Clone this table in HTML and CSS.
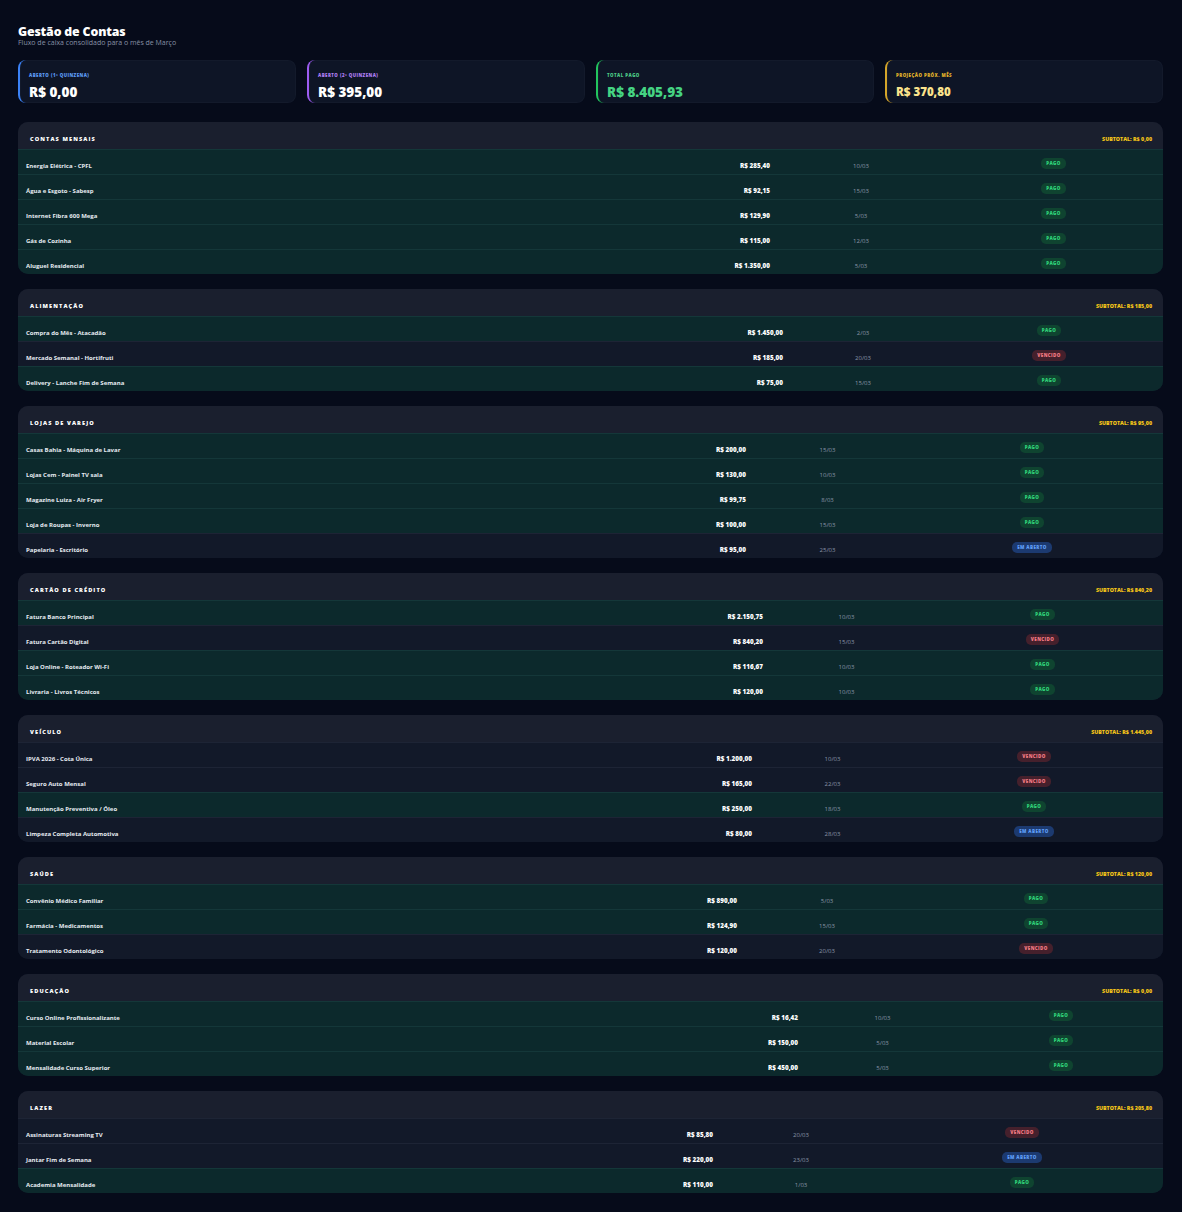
FILE: index.html
```html
<!DOCTYPE html>
<html lang="pt-BR">
<head>
<meta charset="utf-8">
<title>Gestão de Contas</title>
<link rel="stylesheet" href="styles.css">
</head>
<body>
<main class="page">
  <header class="page-head">
    <h1>Gestão de Contas</h1>
    <p class="subtitle">Fluxo de caixa consolidado para o mês de Março</p>
  </header>

  <section class="summary">
    <div class="stat stat-blue"><span class="stat-label">Aberto (1ª Quinzena)</span><span class="stat-value">R$ 0,00</span></div>
    <div class="stat stat-purple"><span class="stat-label">Aberto (2ª Quinzena)</span><span class="stat-value">R$ 395,00</span></div>
    <div class="stat stat-green"><span class="stat-label">Total Pago</span><span class="stat-value">R$ 8.405,93</span></div>
    <div class="stat stat-gold"><span class="stat-label">Projeção Próx. Mês</span><span class="stat-value">R$ 370,80</span></div>
  </section>

  <div class="groups">
    <section class="group g-contas">
      <div class="group-head"><h2>Contas Mensais</h2><span class="subtotal">Subtotal: R$ 0,00</span></div>
      <div class="row paid"><span class="c-name">Energia Elétrica - CPFL</span><span class="c-amount">R$ 285,40</span><span class="c-date">10/03</span><span class="c-status"><span class="badge pago">Pago</span></span></div>
      <div class="row paid"><span class="c-name">Água e Esgoto - Sabesp</span><span class="c-amount">R$ 92,15</span><span class="c-date">15/03</span><span class="c-status"><span class="badge pago">Pago</span></span></div>
      <div class="row paid"><span class="c-name">Internet Fibra 600 Mega</span><span class="c-amount">R$ 129,90</span><span class="c-date">5/03</span><span class="c-status"><span class="badge pago">Pago</span></span></div>
      <div class="row paid"><span class="c-name">Gás de Cozinha</span><span class="c-amount">R$ 115,00</span><span class="c-date">12/03</span><span class="c-status"><span class="badge pago">Pago</span></span></div>
      <div class="row paid"><span class="c-name">Aluguel Residencial</span><span class="c-amount">R$ 1.350,00</span><span class="c-date">5/03</span><span class="c-status"><span class="badge pago">Pago</span></span></div>
    </section>

    <section class="group g-alim">
      <div class="group-head"><h2>Alimentação</h2><span class="subtotal">Subtotal: R$ 185,00</span></div>
      <div class="row paid"><span class="c-name">Compra do Mês - Atacadão</span><span class="c-amount">R$ 1.450,00</span><span class="c-date">2/03</span><span class="c-status"><span class="badge pago">Pago</span></span></div>
      <div class="row due"><span class="c-name">Mercado Semanal - Hortifruti</span><span class="c-amount">R$ 185,00</span><span class="c-date">20/03</span><span class="c-status"><span class="badge vencido">Vencido</span></span></div>
      <div class="row paid"><span class="c-name">Delivery - Lanche Fim de Semana</span><span class="c-amount">R$ 75,00</span><span class="c-date">15/03</span><span class="c-status"><span class="badge pago">Pago</span></span></div>
    </section>

    <section class="group g-lojas">
      <div class="group-head"><h2>Lojas de Varejo</h2><span class="subtotal">Subtotal: R$ 95,00</span></div>
      <div class="row paid"><span class="c-name">Casas Bahia - Máquina de Lavar</span><span class="c-amount">R$ 200,00</span><span class="c-date">15/03</span><span class="c-status"><span class="badge pago">Pago</span></span></div>
      <div class="row paid"><span class="c-name">Lojas Cem - Painel TV sala</span><span class="c-amount">R$ 130,00</span><span class="c-date">10/03</span><span class="c-status"><span class="badge pago">Pago</span></span></div>
      <div class="row paid"><span class="c-name">Magazine Luiza - Air Fryer</span><span class="c-amount">R$ 99,75</span><span class="c-date">8/03</span><span class="c-status"><span class="badge pago">Pago</span></span></div>
      <div class="row paid"><span class="c-name">Loja de Roupas - Inverno</span><span class="c-amount">R$ 100,00</span><span class="c-date">15/03</span><span class="c-status"><span class="badge pago">Pago</span></span></div>
      <div class="row due"><span class="c-name">Papelaria - Escritório</span><span class="c-amount">R$ 95,00</span><span class="c-date">25/03</span><span class="c-status"><span class="badge aberto">Em Aberto</span></span></div>
    </section>

    <section class="group g-cartao">
      <div class="group-head"><h2>Cartão de Crédito</h2><span class="subtotal">Subtotal: R$ 840,20</span></div>
      <div class="row paid"><span class="c-name">Fatura Banco Principal</span><span class="c-amount">R$ 2.150,75</span><span class="c-date">10/03</span><span class="c-status"><span class="badge pago">Pago</span></span></div>
      <div class="row due"><span class="c-name">Fatura Cartão Digital</span><span class="c-amount">R$ 840,20</span><span class="c-date">15/03</span><span class="c-status"><span class="badge vencido">Vencido</span></span></div>
      <div class="row paid"><span class="c-name">Loja Online - Roteador Wi-Fi</span><span class="c-amount">R$ 116,67</span><span class="c-date">10/03</span><span class="c-status"><span class="badge pago">Pago</span></span></div>
      <div class="row paid"><span class="c-name">Livraria - Livros Técnicos</span><span class="c-amount">R$ 120,00</span><span class="c-date">10/03</span><span class="c-status"><span class="badge pago">Pago</span></span></div>
    </section>

    <section class="group g-veiculo">
      <div class="group-head"><h2>Veículo</h2><span class="subtotal">Subtotal: R$ 1.445,00</span></div>
      <div class="row due"><span class="c-name">IPVA 2026 - Cota Única</span><span class="c-amount">R$ 1.200,00</span><span class="c-date">10/03</span><span class="c-status"><span class="badge vencido">Vencido</span></span></div>
      <div class="row due"><span class="c-name">Seguro Auto Mensal</span><span class="c-amount">R$ 165,00</span><span class="c-date">22/03</span><span class="c-status"><span class="badge vencido">Vencido</span></span></div>
      <div class="row paid"><span class="c-name">Manutenção Preventiva / Óleo</span><span class="c-amount">R$ 250,00</span><span class="c-date">18/03</span><span class="c-status"><span class="badge pago">Pago</span></span></div>
      <div class="row due"><span class="c-name">Limpeza Completa Automotiva</span><span class="c-amount">R$ 80,00</span><span class="c-date">28/03</span><span class="c-status"><span class="badge aberto">Em Aberto</span></span></div>
    </section>

    <section class="group g-saude">
      <div class="group-head"><h2>Saúde</h2><span class="subtotal">Subtotal: R$ 120,00</span></div>
      <div class="row paid"><span class="c-name">Convênio Médico Familiar</span><span class="c-amount">R$ 890,00</span><span class="c-date">5/03</span><span class="c-status"><span class="badge pago">Pago</span></span></div>
      <div class="row paid"><span class="c-name">Farmácia - Medicamentos</span><span class="c-amount">R$ 124,90</span><span class="c-date">15/03</span><span class="c-status"><span class="badge pago">Pago</span></span></div>
      <div class="row due"><span class="c-name">Tratamento Odontológico</span><span class="c-amount">R$ 120,00</span><span class="c-date">20/03</span><span class="c-status"><span class="badge vencido">Vencido</span></span></div>
    </section>

    <section class="group g-educ">
      <div class="group-head"><h2>Educação</h2><span class="subtotal">Subtotal: R$ 0,00</span></div>
      <div class="row paid"><span class="c-name">Curso Online Profissionalizante</span><span class="c-amount">R$ 16,42</span><span class="c-date">10/03</span><span class="c-status"><span class="badge pago">Pago</span></span></div>
      <div class="row paid"><span class="c-name">Material Escolar</span><span class="c-amount">R$ 150,00</span><span class="c-date">5/03</span><span class="c-status"><span class="badge pago">Pago</span></span></div>
      <div class="row paid"><span class="c-name">Mensalidade Curso Superior</span><span class="c-amount">R$ 450,00</span><span class="c-date">5/03</span><span class="c-status"><span class="badge pago">Pago</span></span></div>
    </section>

    <section class="group g-lazer">
      <div class="group-head"><h2>Lazer</h2><span class="subtotal">Subtotal: R$ 305,80</span></div>
      <div class="row due"><span class="c-name">Assinaturas Streaming TV</span><span class="c-amount">R$ 85,80</span><span class="c-date">20/03</span><span class="c-status"><span class="badge vencido">Vencido</span></span></div>
      <div class="row due"><span class="c-name">Jantar Fim de Semana</span><span class="c-amount">R$ 220,00</span><span class="c-date">23/03</span><span class="c-status"><span class="badge aberto">Em Aberto</span></span></div>
      <div class="row paid"><span class="c-name">Academia Mensalidade</span><span class="c-amount">R$ 110,00</span><span class="c-date">1/03</span><span class="c-status"><span class="badge pago">Pago</span></span></div>
    </section>
  </div>
</main>
</body>
</html>
```

FILE: styles.css
```css
html, body {
  margin: 0;
  padding: 0;
  background: #060b1a;
}

body {
  font-family: "Open Sans", "Noto Sans", sans-serif;
  color: #e2e8f0;
}

.page {
  padding: 24px 19px 18px 18px;
}

/* ---------- Page heading ---------- */
.page-head h1 {
  margin: 0;
  font-size: 12.3px;
  line-height: 15px;
  font-weight: 800;
  color: #ffffff;
  letter-spacing: -0.15px;
}

.subtitle {
  margin: 0;
  font-size: 7px;
  line-height: 8px;
  color: #8791a5;
}

/* ---------- Summary cards ---------- */
.summary {
  display: grid;
  grid-template-columns: repeat(4, 1fr);
  gap: 11px;
  margin-top: 13px;
}

.stat {
  height: 43px;
  box-sizing: border-box;
  padding: 12px 9px 0 9px;
  background: #0e1526;
  border-radius: 8px;
  border-left: 2px solid #3b82f6;
  box-shadow: inset 0 0 0 1px rgba(255, 255, 255, 0.025);
}

.stat-label {
  display: block;
  font-size: 4.4px;
  line-height: 6px;
  font-weight: 800;
  letter-spacing: 0.45px;
  text-transform: uppercase;
}

.stat-value {
  display: block;
  margin-top: 6px;
  font-size: 13.5px;
  line-height: 16px;
  font-weight: 800;
  color: #ffffff;
}

.stat-blue { border-left-color: #3b82f6; }
.stat-blue .stat-label { color: #5d9bf5; }

.stat-purple { border-left-color: #9d5cf2; }
.stat-purple .stat-label { color: #b07ff3; }

.stat-green { border-left-color: #22c55e; }
.stat-green .stat-label { color: #4ccb86; }
.stat-green .stat-value { color: #45d483; }

.stat-gold { border-left-color: #d4a52a; }
.stat-gold .stat-label { color: #e2b42a; }
.stat-gold .stat-value { color: #fbe38c; font-size: 11.5px; }

/* ---------- Groups ---------- */
.groups {
  display: flex;
  flex-direction: column;
  gap: 15px;
  margin-top: 19px;
}

.group {
  background: #121929;
  border-radius: 10px;
  overflow: hidden;
}

.group-head {
  height: 27px;
  box-sizing: border-box;
  padding: 7px 11px 0 12px;
  display: flex;
  align-items: center;
  justify-content: space-between;
  background: #1a1f2e;
}

.group-head h2 {
  margin: 0;
  font-size: 5.6px;
  line-height: 8px;
  font-weight: 800;
  letter-spacing: 1.1px;
  text-transform: uppercase;
  color: #ffffff;
}

.subtotal {
  font-size: 5.3px;
  line-height: 8px;
  font-weight: 800;
  text-transform: uppercase;
  color: #f5c518;
}

/* ---------- Rows ---------- */
.row {
  display: grid;
  height: 25px;
  box-sizing: border-box;
  align-items: center;
  border-top: 1px solid #1c2333;
}

.row.paid {
  background: #0c292c;
  border-top-color: #143739;
}

.row.due {
  background: #121929;
  border-top-color: #1d2435;
}

.c-name,
.c-amount,
.c-date {
  padding-top: 7px;
  font-size: 6px;
  line-height: 8px;
  white-space: nowrap;
}

.c-name {
  padding-left: 8px;
  font-weight: 700;
  color: #e6ebf2;
}

.c-amount {
  padding-right: 8px;
  text-align: right;
  font-size: 6.3px;
  font-weight: 800;
  color: #ffffff;
}

.c-date {
  text-align: center;
  color: #8a95a8;
}

.c-status {
  text-align: center;
}

.badge {
  display: inline-block;
  height: 11px;
  line-height: 11px;
  padding: 0 5px;
  border-radius: 5px;
  font-size: 4.5px;
  font-weight: 800;
  letter-spacing: 0.4px;
  text-transform: uppercase;
  vertical-align: middle;
}

.badge.pago { background: #0f4430; color: #2fd37a; }
.badge.vencido { background: #45202c; color: #f47b84; }
.badge.aberto { background: #1c3a70; color: #5f9ef7; }

/* Column widths per group (amount / date / status columns) */
.g-contas .row  { grid-template-columns: 1fr 100px 166px 219px; }
.g-alim .row    { grid-template-columns: 1fr 100px 144px 228px; }
.g-lojas .row   { grid-template-columns: 1fr 100px 147px 262px; }
.g-cartao .row  { grid-template-columns: 1fr 100px 151px 241px; }
.g-veiculo .row { grid-template-columns: 1fr 100px 145px 258px; }
.g-saude .row   { grid-template-columns: 1fr 100px 164px 254px; }
.g-educ .row    { grid-template-columns: 1fr 100px 153px 204px; }
.g-lazer .row   { grid-template-columns: 1fr 100px 160px 282px; }
```
